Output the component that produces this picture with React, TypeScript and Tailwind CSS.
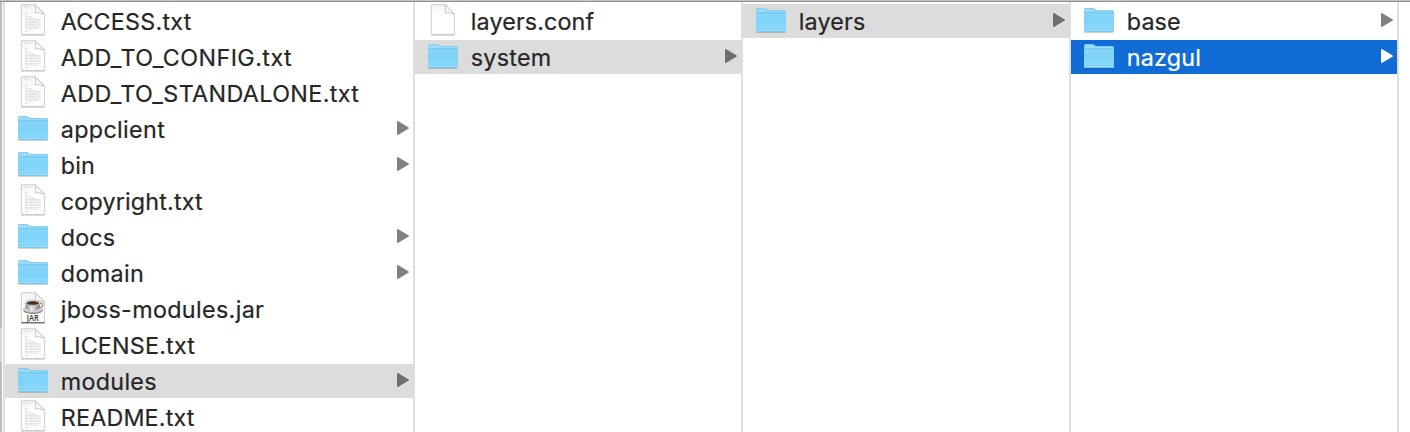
type Kind = 'text' | 'blank' | 'folder' | 'jar';

interface Entry {
  name: string;
  kind: Kind;
  state?: 'open' | 'active';
  tracking?: string;
}

const COLUMNS: { width: string; entries: Entry[] }[] = [
  {
    width: 'w-[410px]',
    entries: [
      { name: 'ACCESS.txt', kind: 'text', tracking: 'tracking-[0.25px]' },
      { name: 'ADD_TO_CONFIG.txt', kind: 'text', tracking: 'tracking-[0.43px]' },
      { name: 'ADD_TO_STANDALONE.txt', kind: 'text', tracking: 'tracking-[0.37px]' },
      { name: 'appclient', kind: 'folder', tracking: 'tracking-[0.35px]' },
      { name: 'bin', kind: 'folder', tracking: 'tracking-[0.1px]' },
      { name: 'copyright.txt', kind: 'text', tracking: 'tracking-[0.18px]' },
      { name: 'docs', kind: 'folder', tracking: 'tracking-[0.1px]' },
      { name: 'domain', kind: 'folder', tracking: 'tracking-[0.35px]' },
      { name: 'jboss-modules.jar', kind: 'jar', tracking: 'tracking-[0.36px]' },
      { name: 'LICENSE.txt', kind: 'text', tracking: 'tracking-[0.2px]' },
      { name: 'modules', kind: 'folder', state: 'open', tracking: 'tracking-[0.3px]' },
      { name: 'README.txt', kind: 'text', tracking: 'tracking-[0.18px]' },
    ],
  },
  {
    width: 'w-[328px]',
    entries: [
      { name: 'layers.conf', kind: 'blank', tracking: 'tracking-[0.12px]' },
      { name: 'system', kind: 'folder', state: 'open', tracking: 'tracking-[0.25px]' },
    ],
  },
  { width: 'w-[328px]', entries: [{ name: 'layers', kind: 'folder', state: 'open', tracking: 'tracking-[0.15px]' }] },
  {
    width: 'w-[328px]',
    entries: [
      { name: 'base', kind: 'folder', tracking: 'tracking-[0.1px]' },
      { name: 'nazgul', kind: 'folder', state: 'active', tracking: 'tracking-[0.2px]' },
    ],
  },
];

function FolderIcon() {
  return (
    <svg width="34" height="34" viewBox="0 0 34 34">
      <path d="M2.5 28.4h29" stroke="#000" strokeOpacity=".18" strokeWidth="1" />
      <path d="M2 6.2Q2 4 4 4h6.6q1 0 1.8.8L14 6.1h16.4q1.6 0 1.6 1.6V27H2z" fill="#78c8ec" />
      <path d="M2.6 6.5q0-1.7 1.6-1.7h6.2q.8 0 1.5.7l1.7 1.3h16.6q1.2 0 1.2 1.2v2H2.6z" fill="#9adcf8" />
      <path d="M2 9h30v18q0 1-1 1H3q-1 0-1-1z" fill="url(#folder-face)" />
      <path d="M2 8.8h30" stroke="#67bfe8" strokeWidth=".9" />
      <path d="M2.4 25.5h29.2" stroke="#76caf0" strokeWidth=".6" />
      <path d="M2.4 26.4h29.2" stroke="#a0e0fa" strokeWidth=".8" />
      <path d="M2.3 27.6h29.4" stroke="#6cb6d8" strokeWidth=".7" />
    </svg>
  );
}

const TEXT_LINES = [
  [8.6, 9, 12], [10.4, 9, 10.5], [12.3, 9, 15], [14.1, 9, 19.5], [15.6, 9, 24.5], [17.1, 9, 25],
  [18.6, 9, 23], [20.1, 9, 25], [21.6, 9, 24], [23.4, 9, 25], [24.9, 9, 22], [27.2, 9, 14],
];

function PageIcon({ kind }: { kind: Kind }) {
  return (
    <svg width="34" height="34" viewBox="0 0 34 34">
      <path d="M5.3 30.9h23.2" stroke="#000" strokeOpacity=".28" strokeWidth="1.2" />
      <path d="M5.4.7h13.8l9.2 9.4v20.3h-23z" fill="url(#page-face)" stroke="#c8c8c8" strokeWidth=".9" />
      {kind === 'text' && (
        <g stroke="#777" strokeOpacity=".36" strokeWidth=".75" strokeDasharray="2.6 .5 1.4 .4 3.2 .5">
          <path d="M8.5 2.9h5" />
          {TEXT_LINES.map(([y, from, to]) => (
            <path key={y} d={`M${from} ${y}H${to}`} />
          ))}
        </g>
      )}
      {kind === 'jar' && (
        <g>
          <ellipse cx="17" cy="18.4" rx="9.6" ry="3.6" fill="#858585" />
          <ellipse cx="17" cy="17.4" rx="9.5" ry="3.3" fill="#d2d2d2" stroke="#a2a2a2" strokeWidth=".6" />
          <path d="M23.8 11.5q3.6-.7 3 1.8-.7 2.2-4.2 2.6" fill="none" stroke="#999" strokeWidth="1.3" />
          <path d="M9.1 10.8q.2 8.8 7.6 8.9 7.5-.1 7.8-8.9z" fill="url(#cup)" />
          <ellipse cx="16.8" cy="10.8" rx="7.8" ry="3" fill="#eee" stroke="#989898" strokeWidth=".5" />
          <ellipse cx="16.8" cy="11.1" rx="6.4" ry="2" fill="#4c321f" />
          <path d="M12.5 12q4 1.6 8.2.1" stroke="#9b7043" strokeWidth=".7" fill="none" />
          <text x="16.8" y="29.2" textAnchor="middle" fontFamily="Open Sans, sans-serif" fontSize="8" fontWeight="600" fill="#333" textLength="12" lengthAdjust="spacingAndGlyphs">JAR</text>
          <path d="M5 30.8h23.7" stroke="#555" strokeWidth="1" />
        </g>
      )}
      <path d="M19.2.7q1 4.9-.1 8 4.5-.5 9.3 1.4z" fill="#f7f7f7" stroke="#bababa" strokeWidth=".8" strokeLinejoin="round" />
    </svg>
  );
}

function Row({ entry }: { entry: Entry }) {
  const { name, kind, state, tracking } = entry;
  const surface =
    state === 'active' ? 'bg-[#116cd6] text-white' : state === 'open' ? 'bg-[#dcdcdc] text-[#262626]' : 'text-[#262626]';
  const arrow = state === 'active' ? 'fill-white' : state === 'open' ? 'fill-[#6e6e6e]' : 'fill-[#808080]';
  return (
    <li className={`flex h-[34px] shrink-0 items-center pr-1 pl-[11px] ${surface}`}>
      <span className="h-[34px] w-[44.8px] shrink-0">{kind === 'folder' ? <FolderIcon /> : <PageIcon kind={kind} />}</span>
      <span className={`grow pt-0.5 text-[23.3px] leading-[34px] whitespace-nowrap [-webkit-text-stroke:0.2px_currentColor] ${tracking ?? 'tracking-normal'}`}>{name}</span>
      {kind === 'folder' && (
        <svg className={arrow} width="12" height="34" viewBox="0 0 12 34">
          <path d="M0 10q0-1.4 1.3-.8l10 6q1.2.8 0 1.6l-10 6q-1.3.6-1.3-.8z" />
        </svg>
      )}
    </li>
  );
}

export default function App() {
  return (
    <main className="flex h-[432px] w-[1410px] flex-col overflow-hidden bg-white font-[Inter,sans-serif]">
      <svg className="absolute h-0 w-0" aria-hidden="true">
        <defs>
          <linearGradient id="folder-face" x1="0" y1="0" x2="0" y2="1">
            <stop offset="0" stopColor="#8ad7f8" />
            <stop offset=".45" stopColor="#7cd2f7" />
            <stop offset="1" stopColor="#91dcfb" />
          </linearGradient>
          <linearGradient id="page-face" x1="0" y1="0" x2="0" y2="1">
            <stop offset="0" stopColor="#f3f3f3" />
            <stop offset=".4" stopColor="#fff" />
          </linearGradient>
          <linearGradient id="cup" x1="0" y1="0" x2="1" y2="0">
            <stop offset="0" stopColor="#777" />
            <stop offset=".4" stopColor="#eee" />
            <stop offset="1" stopColor="#777" />
          </linearGradient>
        </defs>
      </svg>
      <div className="h-0.5 shrink-0 border-b border-[#909090] bg-[#c6c6c6]" />
      <div className="flex min-h-0 grow">
        <div className="flex w-[5px] shrink-0 border-r-2 border-[#dfdfdf]">
          <div className="flex w-0.5 flex-col bg-[#bcbcbc] pt-[326px]">
            <div className="h-[34px] bg-[#d6d6d6]" />
          </div>
        </div>
        {COLUMNS.map((column, i) => (
          <ul key={i} className={`flex shrink-0 flex-col gap-0.5 border-r-2 border-[#dfdfdf] pt-0.5 ${column.width}`}>
            {column.entries.map((entry) => (
              <Row key={entry.name} entry={entry} />
            ))}
          </ul>
        ))}
      </div>
    </main>
  );
}
